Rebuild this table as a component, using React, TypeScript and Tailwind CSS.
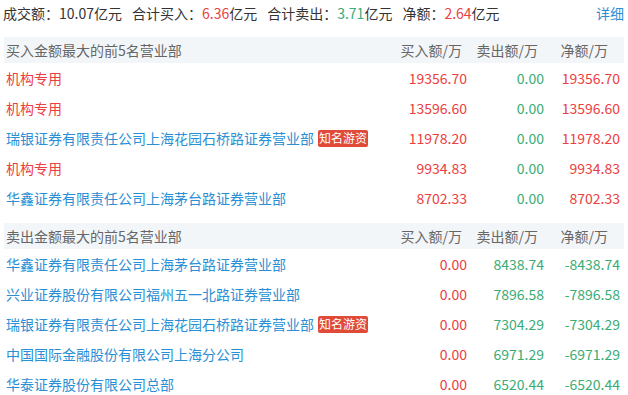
import React from "react";

const RED = "text-[#ec4040]";
const GREEN = "text-[#3aac76]";

type Row = { name: string; buy: string; sell: string; net: string; inst?: boolean; tag?: boolean };

const buyRows: Row[] = [
  { name: "机构专用", buy: "19356.70", sell: "0.00", net: "19356.70", inst: true },
  { name: "机构专用", buy: "13596.60", sell: "0.00", net: "13596.60", inst: true },
  { name: "瑞银证券有限责任公司上海花园石桥路证券营业部", buy: "11978.20", sell: "0.00", net: "11978.20", tag: true },
  { name: "机构专用", buy: "9934.83", sell: "0.00", net: "9934.83", inst: true },
  { name: "华鑫证券有限责任公司上海茅台路证券营业部", buy: "8702.33", sell: "0.00", net: "8702.33" },
];

const sellRows: Row[] = [
  { name: "华鑫证券有限责任公司上海茅台路证券营业部", buy: "0.00", sell: "8438.74", net: "-8438.74" },
  { name: "兴业证券股份有限公司福州五一北路证券营业部", buy: "0.00", sell: "7896.58", net: "-7896.58" },
  { name: "瑞银证券有限责任公司上海花园石桥路证券营业部", buy: "0.00", sell: "7304.29", net: "-7304.29", tag: true },
  { name: "中国国际金融股份有限公司上海分公司", buy: "0.00", sell: "6971.29", net: "-6971.29" },
  { name: "华泰证券股份有限公司总部", buy: "0.00", sell: "6520.44", net: "-6520.44" },
];

function Header({ title }: { title: string }) {
  return (
    <div className="flex h-[26px] items-center bg-[#f3f6f9] text-[#666666]">
      <div className="flex-1 pl-[2px]">{title}</div>
      <div className="w-[77px] pr-[5px] text-right">买入额/万</div>
      <div className="w-[77px] pr-[6px] text-right">卖出额/万</div>
      <div className="w-[80px] pr-[16px] text-right">净额/万</div>
    </div>
  );
}

function DataRow({ r, sellSide }: { r: Row; sellSide: boolean }) {
  return (
    <div className="flex h-[30px] items-center">
      <div className="flex flex-1 items-center pl-[2px]">
        <span className={r.inst ? "text-[#ec4040]" : "text-[#2a8fd4]"}>{r.name}</span>
        {r.tag && (
          <span className="ml-[4px] flex h-[17px] items-center rounded-[2px] bg-[#e04a38] px-[1px] text-[12px] text-white">
            知名游资
          </span>
        )}
      </div>
      <div className={`w-[77px] text-right ${RED}`}>{r.buy}</div>
      <div className={`w-[77px] text-right ${GREEN}`}>{r.sell}</div>
      <div className={`w-[80px] pr-[4px] text-right ${sellSide ? GREEN : RED}`}>{r.net}</div>
    </div>
  );
}

export default function App() {
  return (
    <div
      className="w-[628px] h-[395px] overflow-hidden bg-white px-[4px] text-[14px] leading-none"
      style={{ fontFamily: '"Noto Sans CJK SC", "Noto Sans", sans-serif' }}
    >
      <div className="-ml-[1px] flex h-[25px] items-center text-[#333333]">
        <span>成交额：10.07亿元</span>
        <span className="ml-[10px]">
          合计买入：<span className={RED}>6.36</span>亿元
        </span>
        <span className="ml-[10px]">
          合计卖出：<span className={GREEN}>3.71</span>亿元
        </span>
        <span className="ml-[10px]">
          净额：<span className={RED}>2.64</span>亿元
        </span>
        <span className="ml-auto text-[#2a8fd4]">详细</span>
      </div>
      <div className="mt-[12px]">
        <Header title="买入金额最大的前5名营业部" />
        {buyRows.map((r, i) => (
          <DataRow key={i} r={r} sellSide={false} />
        ))}
      </div>
      <div className="mt-[10px]">
        <Header title="卖出金额最大的前5名营业部" />
        {sellRows.map((r, i) => (
          <DataRow key={i} r={r} sellSide={true} />
        ))}
      </div>
    </div>
  );
}
